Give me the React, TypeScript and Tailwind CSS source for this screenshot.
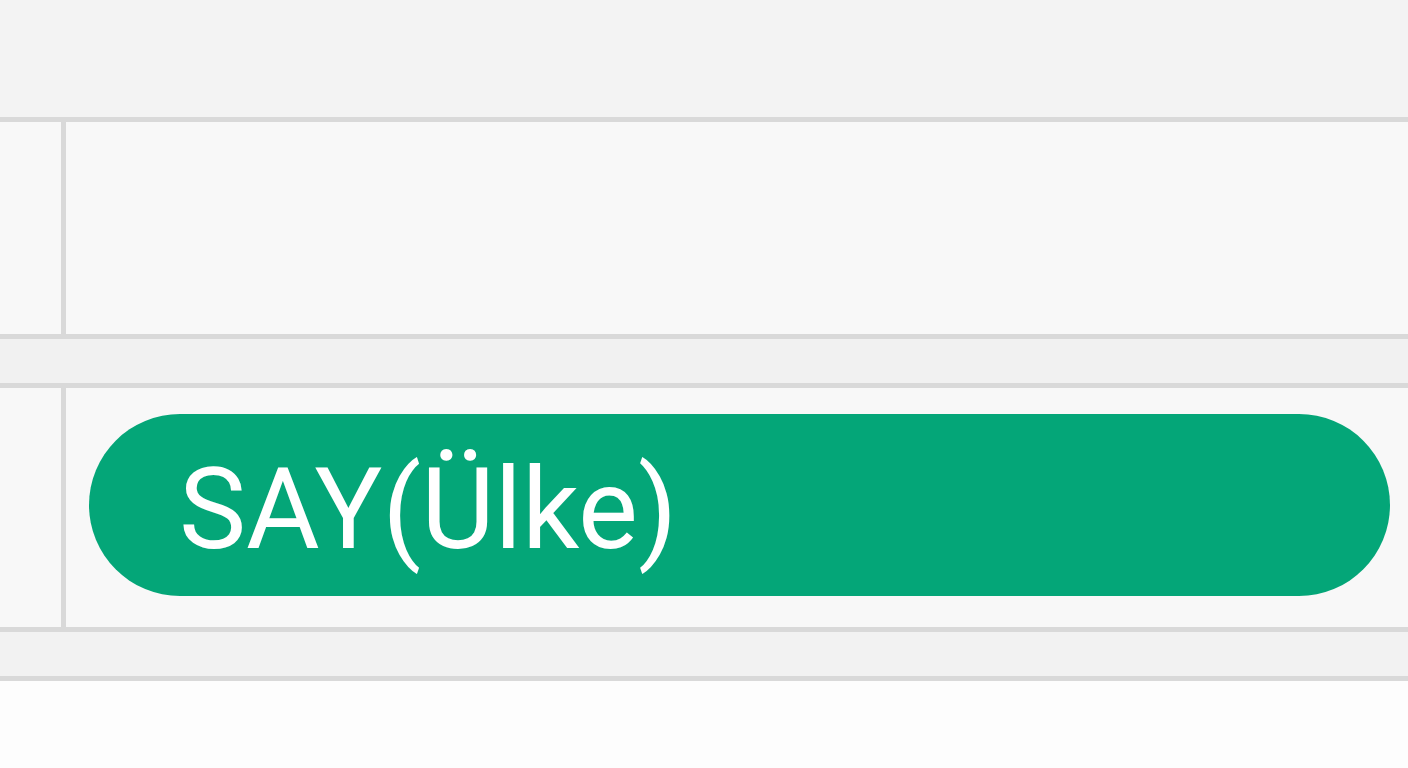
export default function App() {
  return (
    <div className="w-[1408px] h-[768px] overflow-hidden bg-[#fdfdfd] flex flex-col">
      {/* top band */}
      <div className="h-[117px] shrink-0 bg-[#f3f3f3]" />
      <div className="h-[5px] shrink-0 bg-[#d9d9d9]" />

      {/* row 1 */}
      <div className="h-[212px] shrink-0 flex bg-[#f8f8f8]">
        <div className="w-[61px] shrink-0" />
        <div className="w-[5px] shrink-0 bg-[#d9d9d9]" />
        <div className="flex-1" />
      </div>
      <div className="h-[5px] shrink-0 bg-[#d9d9d9]" />

      {/* spacer strip */}
      <div className="h-[44px] shrink-0 bg-[#f1f1f1]" />
      <div className="h-[5px] shrink-0 bg-[#d9d9d9]" />

      {/* row 2 */}
      <div className="h-[239px] shrink-0 flex bg-[#f8f8f8]">
        <div className="w-[61px] shrink-0" />
        <div className="w-[5px] shrink-0 bg-[#d9d9d9]" />
        <div className="flex-1 flex items-start pt-[26px] pl-[23px] pr-[18px]">
          <div className="h-[182px] w-full rounded-full bg-[#04a678] flex items-center pl-[90px]">
            <span
              className="text-white text-[113px] leading-none pt-[8px]"
              style={{ fontFamily: 'Roboto, "Liberation Sans", sans-serif' }}
            >
              SAY(Ülke)
            </span>
          </div>
        </div>
      </div>
      <div className="h-[5px] shrink-0 bg-[#d9d9d9]" />

      {/* bottom strip */}
      <div className="h-[44px] shrink-0 bg-[#f2f2f2]" />
      <div className="h-[5px] shrink-0 bg-[#d9d9d9]" />
      <div className="flex-1 bg-[#fdfdfd]" />
    </div>
  );
}
